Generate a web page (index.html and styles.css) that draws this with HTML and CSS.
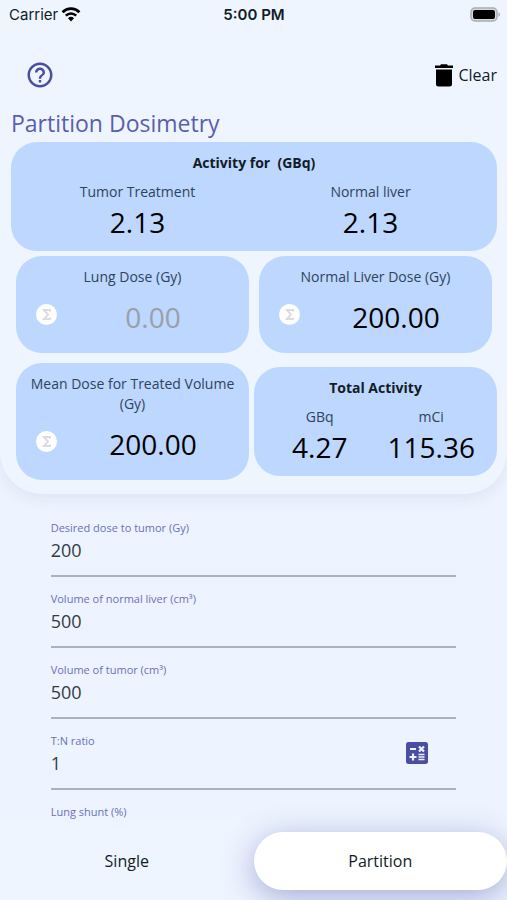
FILE: index.html
```html
<!DOCTYPE html>
<html lang="en">
<head>
    <meta charset="UTF-8">
    <meta name="viewport" content="width=device-width, initial-scale=1.0">
    <title>Partition Dosimetry</title>
    <link rel="stylesheet" href="styles.css">
</head>
<body>
    <header class="panel">
        <div class="status-bar">
            <div class="carrier">
                <span>Carrier</span>
                <svg width="20" height="16" viewBox="0 0 20 16" fill="none" stroke="#000">
                    <path d="M1.6 6.2a11.8 11.8 0 0 1 16.8 0" stroke-width="2.8"/>
                    <path d="M4.8 9.6a7.4 7.4 0 0 1 10.400 0" stroke-width="2.600"/>
                    <path d="M10 15.500 7 12.300a4.300 4.300 0 0 1 6 0z" fill="#000" stroke="none"/>
                </svg>
            </div>
            <span class="clock">5:00 PM</span>
            <svg class="battery" width="31" height="15" viewBox="0 0 31 15">
                <rect x="1" y="1" width="26" height="13" rx="4" fill="#d5dae2" stroke="#a9adb4" stroke-width="1.5"/>
                <rect x="3" y="3" width="22" height="9" rx="2" fill="#000"/>
                <path d="M28.5 5.2c2 .8 2 3.8 0 4.6z" fill="#a9adb4"/>
            </svg>
        </div>

        <div class="toolbar">
            <button type="button" class="icon-btn" aria-label="Help">
                <svg width="30" height="30" viewBox="0 0 24 24" fill="#4a4ea3">
                    <path d="M11 18h2v-2h-2v2zm1-16C6.48 2 2 6.48 2 12s4.48 10 10 10 10-4.48 10-10S17.52 2 12 2zm0 18c-4.41 0-8-3.59-8-8s3.59-8 8-8 8 3.59 8 8-3.59 8-8 8zm0-14c-2.21 0-4 1.79-4 4h2c0-1.1.9-2 2-2s2 .9 2 2c0 2-3 1.75-3 5h2c0-2.25 3-2.5 3-5 0-2.21-1.79-4-4-4z"/>
                </svg>
            </button>
            <button type="button" class="clear-btn">
                <svg width="18" height="23" viewBox="0 0 18 23">
                    <path d="M1 5.5h16V20a2.5 2.5 0 0 1-2.5 2.5h-11A2.5 2.5 0 0 1 1 20zM0 1.5h5L6 .3h6l1 1.2h5V4H0z"/>
                </svg>
                Clear
            </button>
        </div>

        <h1>Partition Dosimetry</h1>

        <div class="cards">
            <section class="card wide">
                <h2>Activity for &nbsp;(GBq)</h2>
                <div class="pair">
                    <div class="result"><span class="caption">Tumor Treatment</span><span class="value">2.13</span></div>
                    <div class="result"><span class="caption">Normal liver</span><span class="value">2.13</span></div>
                </div>
            </section>

            <section class="card dose">
                <label class="caption" for="lungDose">Lung Dose (Gy)</label>
                <div class="dose-row">
                    <button type="button" class="sigma" aria-label="Calculate lung dose">
                        <svg width="10" height="13" viewBox="0 0 10 13"><path d="M8 3.5V2H2l4 4.5L2 11h6V9.500"/></svg>
                    </button>
                    <input type="text" id="lungDose" class="value" placeholder="0.00">
                </div>
            </section>

            <section class="card dose">
                <label class="caption" for="liverDose">Normal Liver Dose (Gy)</label>
                <div class="dose-row">
                    <button type="button" class="sigma" aria-label="Calculate normal liver dose">
                        <svg width="10" height="13" viewBox="0 0 10 13"><path d="M8 3.5V2H2l4 4.5L2 11h6V9.500"/></svg>
                    </button>
                    <input type="text" id="liverDose" class="value" value="200.00">
                </div>
            </section>

            <section class="card dose">
                <label class="caption" for="meanDose">Mean Dose for Treated Volume (Gy)</label>
                <div class="dose-row">
                    <button type="button" class="sigma" aria-label="Calculate mean dose">
                        <svg width="10" height="13" viewBox="0 0 10 13"><path d="M8 3.5V2H2l4 4.5L2 11h6V9.500"/></svg>
                    </button>
                    <input type="text" id="meanDose" class="value" value="200.00">
                </div>
            </section>

            <section class="card">
                <h2>Total Activity</h2>
                <div class="pair">
                    <div class="result"><span class="caption">GBq</span><span class="value">4.27</span></div>
                    <div class="result"><span class="caption">mCi</span><span class="value">115.36</span></div>
                </div>
            </section>
        </div>
    </header>

    <main class="form">
        <div class="field">
            <label for="tumorDose">Desired dose to tumor (Gy)</label>
            <input type="text" id="tumorDose" value="200">
        </div>
        <div class="field">
            <label for="liverVolume">Volume of normal liver (cm³)</label>
            <input type="text" id="liverVolume" value="500">
        </div>
        <div class="field">
            <label for="tumorVolume">Volume of tumor (cm³)</label>
            <input type="text" id="tumorVolume" value="500">
        </div>
        <div class="field with-button">
            <div class="field-text">
                <label for="tnRatio">T:N ratio</label>
                <input type="text" id="tnRatio" value="1">
            </div>
            <button type="button" class="icon-btn" aria-label="Ratio calculator">
                <svg width="24" height="24" viewBox="0 0 24 24">
                    <rect x="1" y="1" width="22" height="22" rx="2.5" fill="#4a4ea3"/>
                    <path d="M5 8h6M14 5.5l5 5M19 5.5l-5 5M8 12.5v7M4.5 16h7" fill="none" stroke="#eef4ff" stroke-width="2.2"/>
                    <path d="M13.5 13.5h6M13.5 16h6M13.5 18.5h6" fill="none" stroke="#eef4ff" stroke-width="1.5"/>
                </svg>
            </button>
        </div>
        <div class="field">
            <label for="lungShunt">Lung shunt (%)</label>
            <input type="text" id="lungShunt">
        </div>
    </main>

    <nav class="tabs">
        <button type="button" class="tab">Single</button>
        <button type="button" class="tab active">Partition</button>
    </nav>
</body>
</html>
```
FILE: styles.css
```css
* {
    box-sizing: border-box;
}
body {
    margin: 0;
    height: 100vh;
    display: flex;
    flex-direction: column;
    overflow: hidden;
    background-color: #edf4ff;
    color: #111c26;
    font-family: "Open Sans", "Noto Sans", sans-serif;
    font-size: 16px;
}
button, input {
    font: inherit;
    color: inherit;
    border: none;
    background: none;
    padding: 0;
    min-width: 0;
}
button {
    cursor: pointer;
}
svg {
    display: block;
}
.panel {
    flex: none;
    padding: 0 10px 9px 11px;
    border-radius: 0 0 42px 42px;
    background-color: #eef5ff;
    box-shadow: 0 4px 16px rgba(60, 70, 130, 0.09);
}

/* Status bar */
.status-bar {
    display: grid;
    grid-template-columns: 1fr auto 1fr;
    align-items: center;
    height: 28px;
    font-family: Inter, "Liberation Sans", sans-serif;
    font-size: 15px;
}
.carrier {
    display: flex;
    align-items: center;
    gap: 3px;
    margin-left: -2px;
}
.clock {
    font-weight: 600;
}
.battery {
    justify-self: end;
    margin-right: -4px;
}

.toolbar {
    display: flex;
    justify-content: space-between;
    align-items: center;
    height: 94px;
    margin-bottom: -14px;
    padding-left: 14px;
}
.clear-btn {
    display: flex;
    align-items: center;
    gap: 5px;
}
h1 {
    margin: 0 0 4px;
    font-size: 23px;
    font-weight: 400;
    line-height: 30px;
    color: #5a5eac;
}

/* Result cards */
.cards {
    display: grid;
    grid-template-columns: repeat(2, minmax(0, 1fr));
    align-items: center;
}
.card {
    padding: 11px 10px 8px;
    border-radius: 26px;
    background-color: #bdd7ff;
    text-align: center;
}
.wide {
    grid-column: 1 / -1;
}
.dose {
    margin: 5px;
    padding-bottom: 16px;
}
h2 {
    margin: 0 0 9px;
    font-size: 14px;
    line-height: 20px;
}
.pair {
    display: grid;
    grid-template-columns: 1fr 1fr;
}
.caption {
    display: block;
    font-size: 14px;
    line-height: 20px;
    color: #2f435c;
}
.value {
    display: block;
    font-size: 28px;
    line-height: 41px;
    color: #000;
}
.dose-row {
    display: flex;
    gap: 10px;
    margin-top: 10px;
    padding-left: 10px;
}
.dose-row .value {
    flex: 1;
    height: 40px;
    text-align: center;
}
.dose-row .value::placeholder {
    color: #9a9fa8;
    opacity: 1;
}
.sigma {
    display: flex;
    align-items: center;
    justify-content: center;
    flex: none;
    width: 21px;
    height: 21px;
    margin-top: 7px;
    border-radius: 50%;
    background-color: #fff;
}
.sigma path {
    fill: none;
    stroke: #dcdce0;
    stroke-width: 2;
}

/* Input form */
.form {
    flex: 1;
    min-height: 0;
    overflow: hidden;
    padding: 26px 10% 0;
}
.field {
    height: 57px;
    margin-bottom: 14px;
    border-bottom: 2px solid #a9b3c0;
}
.field label {
    display: block;
    font-size: 11px;
    line-height: 16px;
    color: #6b70b8;
}
.field input {
    display: block;
    width: 100%;
    height: 28px;
    font-size: 18px;
    color: #333b44;
}
.with-button {
    display: flex;
    align-items: flex-start;
    padding-right: 27px;
}
.with-button .icon-btn {
    padding-top: 8px;
}
.field-text {
    flex: 1;
}

/* Bottom tabs */
.tabs {
    display: flex;
    flex: none;
    padding: 10px 0;
    background-color: #eef5ff;
}
.tab {
    flex: 1;
    height: 58px;
    border-radius: 29px;
}
.tab.active {
    background-color: #fff;
    box-shadow: 0 7px 32px rgba(74, 78, 163, 0.45);
}
```
